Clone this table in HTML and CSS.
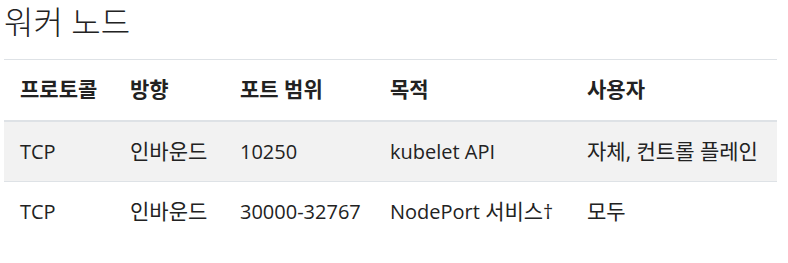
FILE: index.html
```html
<!DOCTYPE html>
<html lang="ko">
<head>
<meta charset="utf-8">
<link rel="stylesheet" href="styles.css">
</head>
<body>
<div class="page">
  <h2 class="title">워커 노드</h2>
  <table class="ports">
    <colgroup>
      <col class="c1"><col class="c2"><col class="c3"><col class="c4"><col class="c5">
    </colgroup>
    <thead>
      <tr><th><span class="ko">프로토콜</span></th><th><span class="ko">방향</span></th><th><span class="ko">포트 범위</span></th><th><span class="ko">목적</span></th><th><span class="ko">사용자</span></th></tr>
    </thead>
    <tbody>
      <tr class="odd"><td>TCP</td><td><span class="ko">인바운드</span></td><td>10250</td><td>kubelet API</td><td><span class="ko">자체, 컨트롤 플레인</span></td></tr>
      <tr><td>TCP</td><td><span class="ko">인바운드</span></td><td>30000-32767</td><td>NodePort <span class="ko">서비스</span>†</td><td><span class="ko">모두</span></td></tr>
    </tbody>
  </table>
</div>
</body>
</html>
```

FILE: styles.css
```css
html, body {
  margin: 0;
  padding: 0;
  background: #fff;
}
body {
  font-family: "Open Sans", "Noto Sans CJK KR", sans-serif;
  color: #222;
  font-size: 20px;
}
.page {
  padding: 0 4px;
}
.title {
  margin: 0 0 17px 0;
  padding-top: 2px;
  font-size: 32px;
  font-weight: 300;
  line-height: 40px;
}
.ports {
  width: 773px;
  border-collapse: collapse;
  table-layout: fixed;
}
.c1 { width: 110px; }
.c2 { width: 110px; }
.c3 { width: 150px; }
.c4 { width: 197px; }
.c5 { width: 206px; }
.ports th, .ports td {
  text-align: left;
  padding: 15px 16px 14px;
  line-height: 30px;
  border-top: 1px solid #dee2e6;
  white-space: nowrap;
}
.ports th {
  font-weight: 700;
  padding-top: 15px;
  padding-bottom: 15px;
  border-bottom: 2px solid #dee2e6;
}
.ports .ko {
  font-size: 21px;
  line-height: 1;
}
.ports .odd td {
  background: #f2f2f2;
}
```
